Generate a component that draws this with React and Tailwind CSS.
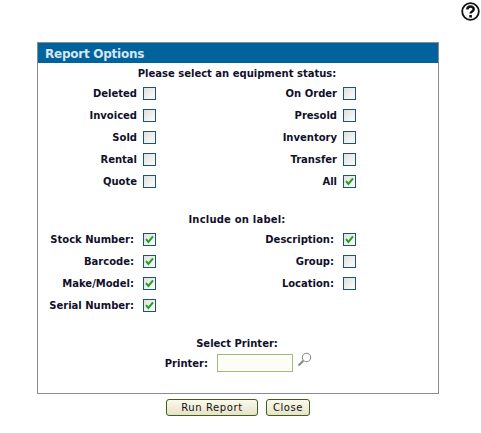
const font = { fontFamily: '"DejaVu Sans", Verdana, sans-serif' };

function Box({ checked }) {
  return (
    <span className="flex h-[13px] w-[13px] shrink-0 items-center justify-center border border-[#1c5180] bg-gradient-to-br from-[#e2e2dc] to-[#fbfbf9]">
      {checked && (
        <svg width="9" height="9" viewBox="0 0 9 9">
          <path d="M1 4.2 L3.4 7 L8 1.4" fill="none" stroke="#21a121" strokeWidth="2" />
        </svg>
      )}
    </span>
  );
}

function Cell({ label, checked, pad }) {
  if (!label) return <div className="w-[200px]" />;
  return (
    <div className="flex w-[200px] items-center">
      <span className={`w-[99px] pt-[1px] text-right whitespace-nowrap ${pad ? "pr-[3px]" : ""}`}>{label}</span>
      <span className="ml-[6px]"><Box checked={checked} /></span>
    </div>
  );
}

function Row({ l, r, lc, rc, pad }) {
  return (
    <div className="flex h-[22px] items-center">
      <Cell label={l} checked={lc} pad={pad} />
      <Cell label={r} checked={rc} pad={pad} />
    </div>
  );
}

export default function App() {
  return (
    <div style={font} className="h-[433px] w-[481px] overflow-hidden bg-white text-[10px] font-bold text-[#10102a]">
      <div className="flex h-[42px] justify-end pt-[2px] pr-[1px]">
        <svg width="19" height="19" viewBox="0 0 19 19">
          <circle cx="9.5" cy="9.5" r="8.3" fill="white" stroke="#111" strokeWidth="1.8" />
          <path d="M6.3 7.6 C6.3 3.5 12.7 3.5 12.7 7.3 C12.7 9.6 9.6 9.4 9.6 11.6" fill="none" stroke="#111" strokeWidth="2.5" />
          <rect x="8.3" y="13" width="2.6" height="2.6" fill="#111" />
        </svg>
      </div>
      <div className="mx-[37px] h-[352px] w-[402px] border border-[#8c8c8c]">
        <div className="flex h-[20px] items-center bg-[#00639c] pt-[1px] pl-[7px] text-[12px] leading-none tracking-[-0.25px] text-[#d7e6f0]">Report Options</div>
        <div className="flex h-[19px] items-center justify-center pt-[1px] pr-[2px]">Please select an equipment status:</div>
        <Row l="Deleted" r="On Order" />
        <Row l="Invoiced" r="Presold" />
        <Row l="Sold" r="Inventory" />
        <Row l="Rental" r="Transfer" />
        <Row l="Quote" r="All" rc />
        <div className="flex h-[36px] items-end justify-center pr-[2px] pb-[1px] tracking-[0.2px]"><span className="h-[15px]">Include on label:</span></div>
        <Row l="Stock Number:" r="Description:" lc rc pad />
        <Row l="Barcode:" r="Group:" lc pad />
        <Row l="Make/Model:" r="Location:" lc pad />
        <Row l="Serial Number:" lc pad />
        <div className="flex h-[35px] items-end justify-center pr-[2px]"><span className="h-[15px]">Select Printer:</span></div>
        <div className="mt-[2px] flex h-[20px] items-center">
          <span className="ml-[126px] w-[44px] text-right">Printer:</span>
          <span className="ml-[9px] h-[18px] w-[76px] border border-[#a5b97c] bg-[#fdfdf8]" />
          <svg className="ml-[4px] -mt-[7px]" width="15" height="15" viewBox="0 0 15 15">
            <circle cx="9.5" cy="5.5" r="4.2" fill="#fff" stroke="#8a8a8a" strokeWidth="1.1" />
            <path d="M6.3 8.7 L1.5 13.5" stroke="#8a8a8a" strokeWidth="2" />
          </svg>
        </div>
      </div>
      <div className="mt-[5px] flex justify-center gap-[8px] pr-[5px] font-normal">
        <button style={font} className="h-[17px] w-[92px] rounded-[3px] border border-[#3f5f1f] bg-gradient-to-b from-[#fbf9ec] to-[#e8e2c8] text-[10px] leading-none tracking-[0.6px] text-[#111]">Run Report</button>
        <button style={font} className="h-[17px] w-[44px] rounded-[3px] border border-[#3f5f1f] bg-gradient-to-b from-[#fbf9ec] to-[#e8e2c8] text-[10px] leading-none tracking-[0.6px] text-[#111]">Close</button>
      </div>
    </div>
  );
}
